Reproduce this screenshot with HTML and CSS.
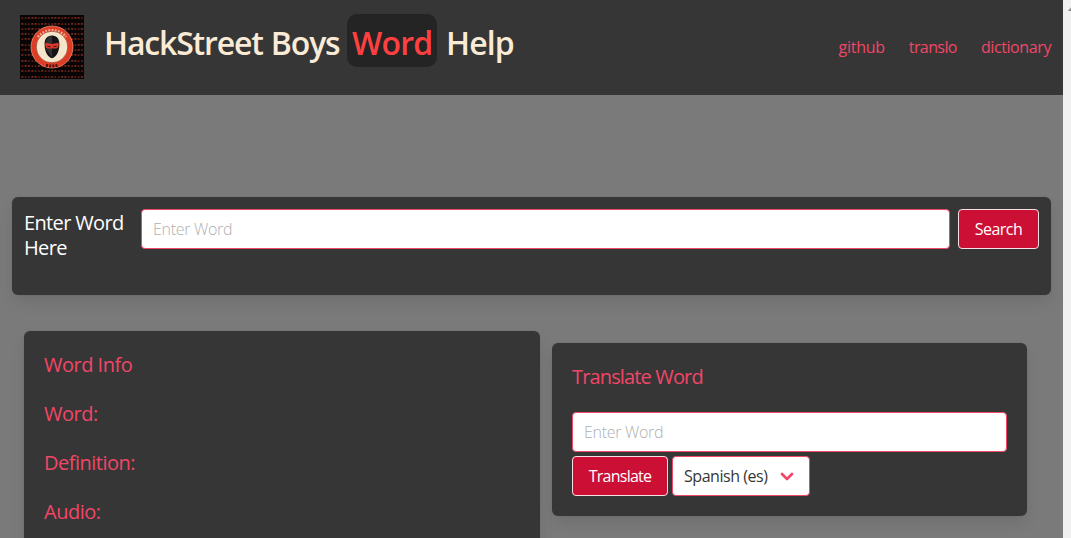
FILE: index.html
```
<!DOCTYPE html>
<html lang="en">
<head>
<meta charset="utf-8">
<title>HackStreet Boys Word Help</title>
<link rel="stylesheet" href="styles.css">
</head>
<body>
<div class="page">
  <header class="header">
    <svg class="logo" viewBox="0 0 64 64" role="img" aria-label="HackStreet Boys logo">
      <rect width="64" height="64" fill="#090405"/>
      <g class="binary">
        <text x="1" y="4.2" textLength="62">1100010110001011001</text>
        <text x="1" y="9.5" textLength="62">0110010011001110100</text>
        <text x="1" y="14.8" textLength="62">1100101100110100110</text>
        <text x="1" y="20.1" textLength="62">0011011010010110010</text>
        <text x="1" y="25.4" textLength="62">1001001011010011011</text>
        <text x="1" y="30.7" textLength="62">0110110010110010100</text>
        <text x="1" y="36" textLength="62">1010010110100101101</text>
        <text x="1" y="41.3" textLength="62">0100110100110110010</text>
        <text x="1" y="46.6" textLength="62">0011001011010010011</text>
        <text x="1" y="51.9" textLength="62">1001101001011001010</text>
        <text x="1" y="57.2" textLength="62">0100110110010110011</text>
        <text x="1" y="62.5" textLength="62">0110011010110010110</text>
      </g>
      <circle cx="32" cy="32" r="21" fill="#e03c25" stroke="#f0a184" stroke-width=".7"/>
      <path d="M18 22A18 18 0 0 1 46 22" fill="none" stroke="#f4b096" stroke-width="2.6" stroke-dasharray="1.8 1.3"/>
      <path d="M26 50.2Q32 52 38 50.2" fill="none" stroke="#4d1512" stroke-width="3" stroke-dasharray="2 1.2"/>
      <circle cx="32" cy="32" r="15.8" fill="#f5e5ca" stroke="#7c2a1b" stroke-width=".6"/>
      <path d="M32 20.5C27 20.5 24.4 24 24.6 30C24.8 37 28 42.5 32 43.3C36 42.5 39.2 37 39.4 30C39.6 24 37 20.5 32 20.5Z" fill="#141416"/>
      <path d="M32 21C28.6 21 26 24 26 28.6V34L32 42.5Z" fill="#303035"/>
      <path d="M25.4 27.7L32 29.1L38.6 27.7V31.2Q37.8 34 34.7 33.4H29.3Q26.2 34 25.4 31.2Z" fill="#df3729"/>
      <path d="M27.3 31.1L30.6 31.8M33.4 31.8L36.7 31.1" stroke="#371214" stroke-width="1"/>
    </svg>
    <h1 class="title"><span class="title-name">HackStreet Boys</span><span class="title-word">Word</span><span class="title-help">Help</span></h1>
    <nav class="links"><a>github</a><a class="translo">translo</a><a class="dictionary">dictionary</a></nav>
  </header>
  <section class="box search-box">
    <label class="search-label" for="word">Enter Word Here</label>
    <input class="input" id="word" placeholder="Enter Word">
    <button class="button search-button">Search</button>
  </section>
  <main class="columns">
    <section class="box info">
      <h2 class="subtitle">Word Info</h2>
      <h2 class="subtitle">Word:</h2>
      <h2 class="subtitle">Definition:</h2>
      <h2 class="subtitle">Audio:</h2>
    </section>
    <section class="box translate">
      <h2 class="subtitle">Translate Word</h2>
      <input class="input" placeholder="Enter Word">
      <div class="controls">
        <button class="button translate-button">Translate</button>
        <div class="select"><span>Spanish (es)</span><svg class="chevron" viewBox="0 0 14 9"><path d="M2 2L7 7L12 2"/></svg></div>
      </div>
    </section>
  </main>
</div>
<div class="scrollbar"><svg class="scroll-arrow" viewBox="0 0 7 4"><path d="M0 4L3.5 0L7 4Z"/></svg></div>
</body>
</html>
```
FILE: styles.css
```
* { box-sizing: border-box; }
body {
  margin: 0;
  height: 538px;
  display: flex;
  overflow: hidden;
  background: #7a7a7a;
  font-family: "Open Sans", "Noto Sans", sans-serif;
  font-size: 16px;
  color: #363636;
}
h1, h2 { margin: 0; }
.page { width: 1063px; height: 538px; overflow: hidden; }
.header {
  height: 95px;
  padding: 14px 12px 0 20px;
  display: flex;
  align-items: flex-start;
  background: #363636;
}
.logo { width: 64px; height: 64px; margin: 1px 20px 0 0; flex: none; }
.binary { font: 4px "Liberation Mono", monospace; fill: #c04630; }
.title {
  display: flex;
  font-size: 32px;
  font-weight: 600;
  line-height: 36px;
  color: #faebd7;
  white-space: nowrap;
}
.title-name { width: 243px; padding-top: 11px; letter-spacing: -1.17px; word-spacing: 1px; }
.title-word {
  width: 90px;
  height: 53px;
  padding: 11px 0 0 5px;
  border-radius: 10px;
  background: #242424;
  color: #ff4040;
  letter-spacing: -.8px;
}
.title-help { padding: 11px 0 0 9px; letter-spacing: -.9px; }
.links {
  margin-left: auto;
  padding-top: 21px;
  display: flex;
  gap: 24px;
  line-height: 24px;
  color: #f14668;
  letter-spacing: -.25px;
}
.translo { letter-spacing: -.6px; }
.dictionary { letter-spacing: -.4px; }
.box {
  border-radius: 6px;
  background: #363636;
  box-shadow: 0 8px 16px -2px rgba(10, 10, 10, .1), 0 0 0 1px rgba(10, 10, 10, .02);
}
.search-box {
  height: 98px;
  margin: 102px 12px 0;
  padding: 12px;
  display: flex;
  align-items: flex-start;
}
.search-label {
  width: 117px;
  padding: 1px 12px 0 0;
  flex: none;
  color: #fff;
  font-size: 20px;
  line-height: 25px;
  letter-spacing: -.65px;
}
.input {
  width: 100%;
  height: 40px;
  padding: 0 11px;
  border: 1px solid #f14668;
  border-radius: 4px;
  background: #fff;
  font: 300 16px "Open Sans", sans-serif;
  letter-spacing: -.3px;
}
.input::placeholder { color: #b0b0b0; opacity: 1; }
.search-box .input { flex: 1; min-width: 0; }
.button {
  height: 40px;
  padding: 0;
  border: 1px solid #f5dfe3;
  border-radius: 4px;
  background: #cc0f35;
  color: #fff;
  font: 16px "Open Sans", sans-serif;
  letter-spacing: -.5px;
}
.search-button { width: 81px; margin-left: 8px; }
.columns {
  padding: 36px 36px 0 24px;
  display: flex;
  align-items: flex-start;
  gap: 12px;
}
.info { width: 516px; height: 260px; padding: 21px 20px; }
.subtitle {
  height: 25px;
  margin-bottom: 24px;
  color: #f14668;
  font-size: 20px;
  font-weight: 400;
  line-height: 25px;
  letter-spacing: -.5px;
}
.translate { width: 475px; height: 173px; margin-top: 12px; padding: 21px 20px; }
.translate .subtitle { margin-bottom: 23px; letter-spacing: -.85px; }
.controls { margin-top: 4px; display: flex; gap: 4px; }
.translate-button { width: 96px; letter-spacing: -.75px; }
.select {
  width: 138px;
  height: 40px;
  padding: 0 15px 0 11px;
  display: flex;
  align-items: center;
  justify-content: space-between;
  border: 1px solid #f14668;
  border-radius: 4px;
  background: #fff;
  letter-spacing: -.45px;
  white-space: nowrap;
}
.chevron { width: 14px; height: 9px; fill: none; stroke: #f14668; stroke-width: 2.7; stroke-linecap: round; stroke-linejoin: round; }
.scrollbar { width: 8px; height: 538px; padding: 7px 0 0 5px; background: #f0f0f0; overflow: hidden; }
.scroll-arrow { display: block; width: 7px; height: 4px; fill: #858585; }
```
